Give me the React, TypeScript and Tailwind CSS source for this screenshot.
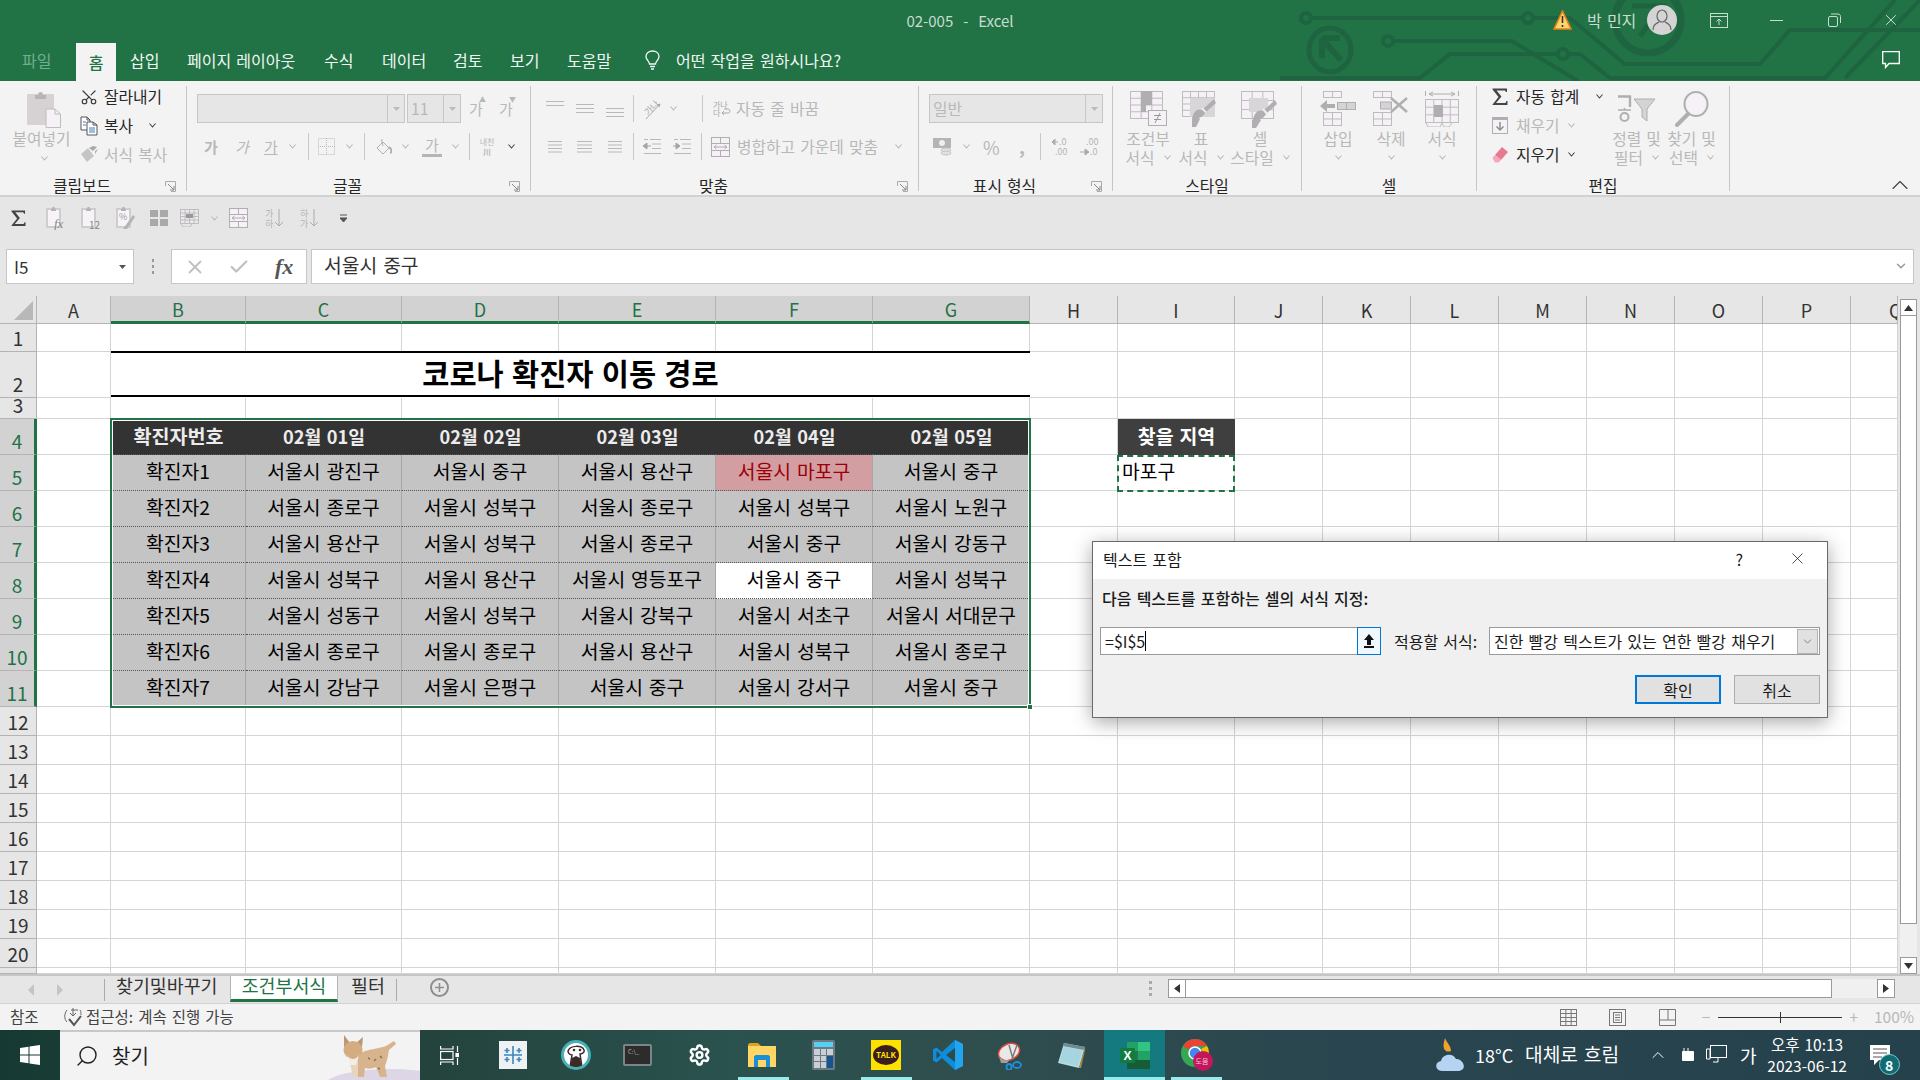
import { ChevronDown, Scissors, Search, Settings, X, Check, ChevronUp } from 'lucide-react';

const GR = '#bebcbe';
const GD = '#b0aeb0';
const PALE = '#f5f1f6';

const Caret = ({ className = '', dark = false }: { className?: string; dark?: boolean }) => (
  <svg width="7" height="5" viewBox="0 0 7 5" className={`shrink-0 ${className}`}>
    <path d="M0.5 0.5 L3.5 4 L6.5 0.5" fill="none" stroke={dark ? '#444' : '#b8b8b8'} strokeWidth="1.1" />
  </svg>
);

const Vsep = ({ className = '' }: { className?: string }) => <div className={`w-px h-[27px] bg-[#c8c8c8] shrink-0 ${className}`} />;

const Launcher = () => (
  <svg width="11" height="11" viewBox="0 0 11 11">
    <path d="M0.5 5 V0.5 H10.5 V10.5 H6" fill="none" stroke="#aaa" />
    <path d="M3 3 L9 9 M5 9 H9 V5" fill="none" stroke="#888" />
  </svg>
);

// Alignment lines. Offsets are the x start and end of each line
const Lines = ({ rows, y = 1, gap = 5, w = 18 }: { rows: [number, number][]; y?: number; gap?: number; w?: number }) => (
  <svg width={w} height="18" viewBox={`0 0 ${w} 18`} className="shrink-0">
    {rows.map(([a, b], i) => (
      <path key={i} d={`M${a} ${y + i * gap + 0.5} H${b}`} stroke="#b9b9b9" />
    ))}
  </svg>
);

const GridIcon = ({ w = 18, h = 18, nx = 3, ny = 3, fill = PALE, stroke = GR }: { w?: number; h?: number; nx?: number; ny?: number; fill?: string; stroke?: string }) => (
  <g>
    <rect x="0.5" y="0.5" width={w - 1} height={h - 1} fill={fill} stroke={stroke} />
    {Array.from({ length: nx - 1 }, (_, i) => (
      <path key={i} d={`M${0.5 + ((i + 1) * (w - 1)) / nx} 0.5 V${h - 0.5}`} stroke={stroke} />
    ))}
    {Array.from({ length: ny - 1 }, (_, i) => (
      <path key={i} d={`M0.5 ${0.5 + ((i + 1) * (h - 1)) / ny} H${w - 0.5}`} stroke={stroke} />
    ))}
  </g>
);

const Brush = ({ x, y }: { x: number; y: number }) => (
  <g transform={`translate(${x} ${y})`}>
    <path d="M0 20 C1 12 6 9 10 11 L13 14 C11 18 6 20 0 20Z" fill={GD} />
    <path d="M11 10 L22 0 L24 4 L14 13Z" fill={GD} />
    <path d="M10 9 L14 13" stroke="#f3f3f3" strokeWidth="1.5" />
  </g>
);

const PasteIcon = () => (
  <svg width="36" height="38" viewBox="0 0 36 38">
    <rect x="1" y="4" width="27" height="31" rx="1" fill="#d6d2d4" />
    <path d="M9 5 H12 C12 1 17 1 17 5 H20 V9 H9Z" fill="#b8b4b6" />
    <path d="M20 19 H29 L34.5 24 V37.5 H20Z" fill={PALE} stroke={GR} />
    <path d="M29 19 V24 H34.5" fill="none" stroke={GR} />
  </svg>
);

const CopyIcon = () => (
  <svg width="18" height="20" viewBox="0 0 18 20">
    <path d="M1 1 H7 L10 4 V14 H1Z M7 1 V4 H10" fill="#fff" stroke="#555" />
    <path d="M7 6 H13 L17 9 V19 H7Z M13 6 V9 H17" fill="#fff" stroke="#555" />
    <path d="M3 6 H6 M3 9 H6 M9 12 H15 M9 14 H15 M9 16 H15" stroke="#3f7cc0" />
  </svg>
);

const PainterIcon = () => (
  <svg width="19" height="17" viewBox="0 0 19 17">
    <path d="M1 8 L8 2 L14 10 L7 16Z" fill="#c6c4c6" />
    <path d="M9 2 L13 0 L17 1 L13 5Z M15 5 L18 3 L15 8Z" fill="#a8a8a8" />
  </svg>
);

const BorderIcon = () => (
  <svg width="17" height="18" viewBox="0 0 17 18">
    <rect x="0.5" y="0.5" width="16" height="16" fill="none" stroke="#bbb" strokeDasharray="1 1" />
    <path d="M8.5 0 V17 M0 8.5 H17" stroke="#bbb" strokeDasharray="1 1" />
  </svg>
);

const FillIcon = () => (
  <svg width="16" height="18" viewBox="0 0 16 18">
    <path d="M7 4 L13 10 L7 16 L1 10Z" fill={PALE} stroke={GD} />
    <path d="M6 1 C5 4 7 6 7 8" fill="none" stroke={GD} />
    <path d="M13 9 C16 11 16 15 14 15" fill="none" stroke={GD} strokeWidth="2" />
  </svg>
);

const OrientIcon = () => (
  <svg width="20" height="24" viewBox="0 0 20 24">
    <text x="1" y="15" fontSize="9" fill="#a8a8a8" transform="rotate(-45 8 12)">가나</text>
    <path d="M3 22 L17 7 M17 7 L14 8 M17 7 L16 10" stroke="#a8a8a8" fill="none" />
  </svg>
);

const WrapIcon = () => (
  <svg width="18" height="17" viewBox="0 0 18 17">
    <text x="0" y="8" fontSize="8" fill="#a8a8a8">가나</text>
    <text x="0" y="16" fontSize="8" fill="#a8a8a8">다</text>
    <path d="M9 13 H15 C17.5 13 17.5 9 15 9 H11 M9 13 L11 11 M9 13 L11 15" stroke="#a8a8a8" fill="none" />
  </svg>
);

const IndentIcon = ({ right = false }: { right?: boolean }) => (
  <svg width="18" height="17" viewBox="0 0 18 17">
    <path d="M7 1.5 H18 M9 6 H18 M9 10.5 H18 M1 15.5 H18 M1 1.5 H5" stroke="#b9b9b9" />
    <path d={right ? 'M0 8 H5 M3 5 L7 8 L3 11Z' : 'M8 8 H3 M4 5 L0 8 L4 11Z'} stroke="#a4a4a4" fill="#a4a4a4" />
  </svg>
);

const MergeIcon = () => (
  <svg width="19" height="20" viewBox="0 0 19 20">
    <rect x="0.5" y="0.5" width="18" height="19" fill={PALE} stroke={GD} />
    <path d="M0.5 6.5 H18.5 M0.5 13.5 H18.5 M9.5 0.5 V6.5 M9.5 13.5 V19.5" stroke={GD} />
    <path d="M3 10 H16 M3 10 L5.5 8 M3 10 L5.5 12 M16 10 L13.5 8 M16 10 L13.5 12" stroke={GD} fill="none" />
  </svg>
);

const CurrencyIcon = () => (
  <svg width="19" height="20" viewBox="0 0 19 20">
    <rect x="0" y="1" width="18" height="10" fill="#b5b3b5" />
    <circle cx="9" cy="6" r="3" fill="#eee" />
    <ellipse cx="13" cy="13" rx="5" ry="2" fill="#e2e0e2" stroke="#c4c4c4" />
    <ellipse cx="13" cy="16" rx="5" ry="2" fill="#e2e0e2" stroke="#c4c4c4" />
  </svg>
);

const DecimalIcon = ({ inc = false }: { inc?: boolean }) => (
  <svg width="19" height="20" viewBox="0 0 19 20" fontSize="9" fill="#b5b5b5">
    {inc ? (
      <>
        <path d="M0 5 H6 M0 5 L3 2 V8Z" stroke="#aaa" />
        <text x="7" y="8">.0</text>
        <text x="3" y="18">.00</text>
      </>
    ) : (
      <>
        <text x="6" y="8">.00</text>
        <path d="M0 15 H6 M9 15 L5 12 V18Z" stroke="#aaa" fill="#aaa" />
        <text x="10" y="18">.0</text>
      </>
    )}
  </svg>
);

const CondIcon = () => (
  <svg width="37" height="36" viewBox="0 0 37 36">
    <GridIcon w={33} h={28} nx={3} ny={4} />
    <path d="M11 0 H22 V7 H11Z M11 7 H22 V14 H11Z M11 14 H16 V21 H11Z" fill={GD} />
    <rect x="18.5" y="19.5" width="18" height="15" fill={PALE} stroke={GD} />
    <path d="M24 24.5 H31 M24 28.5 H31 M30 22 L25 32" stroke="#999" fill="none" />
  </svg>
);

const TableIcon = () => (
  <svg width="38" height="37" viewBox="0 0 38 37">
    <GridIcon w={33} h={26} nx={4} ny={4} />
    <rect x="8" y="7" width="25" height="19" fill="#d9d6d9" />
    <Brush x={10} y={8} />
    <path d="M10 28 C12 26 16 26 18 28 L14 36 H10Z" fill={GD} />
  </svg>
);

const CellStyleIcon = () => (
  <svg width="39" height="38" viewBox="0 0 39 38">
    <GridIcon w={33} h={28} nx={3} ny={3} />
    <rect x="8" y="7" width="19" height="14" fill="#d9d6d9" />
    <Brush x={12} y={9} />
    <path d="M11 29 C13 27 18 27 20 29 L15 37 H11Z" fill={GD} />
  </svg>
);

const InsertIcon = () => (
  <svg width="36" height="35" viewBox="0 0 36 35">
    <rect x="3.5" y="0.5" width="18" height="6" fill={PALE} stroke={GR} />
    <path d="M12.5 0.5 V6.5" stroke={GR} />
    <rect x="17.5" y="11.5" width="18" height="7" fill="#d6d3d6" stroke={GD} />
    <path d="M26.5 11.5 V18.5" stroke={GD} />
    <path d="M0 15 L7 9 V13 H15 V17 H7 V21Z" fill={GD} />
    <g transform="translate(3 21)"><GridIcon w={19} h={14} nx={2} ny={2} /></g>
  </svg>
);

const DeleteIcon = () => (
  <svg width="36" height="35" viewBox="0 0 36 35">
    <rect x="0.5" y="0.5" width="18" height="6" fill={PALE} stroke={GR} />
    <path d="M9.5 0.5 V6.5" stroke={GR} />
    <rect x="7.5" y="11" width="11" height="7" fill="#d6d3d6" stroke={GD} />
    <g transform="translate(0 21)"><GridIcon w={19} h={14} nx={2} ny={2} /></g>
    <path d="M18 7 L34 21 M34 7 L18 21" stroke={GD} strokeWidth="2.5" />
  </svg>
);

const FormatIcon = () => (
  <svg width="35" height="36" viewBox="0 0 35 36">
    <path d="M0.5 0 V5 M33.5 0 V5 M4 3 H30 M4 3 L8 1 M4 3 L8 5 M30 3 L26 1 M30 3 L26 5" stroke={GD} fill="none" />
    <g transform="translate(0 8)"><GridIcon w={34} h={24} nx={4} ny={3} /></g>
    <rect x="9" y="14" width="9" height="12" fill={GD} />
    <path d="M1 32 L3 36 H15 L17 32 M17 32 L19 36 H24 L27 32" fill="none" stroke={GR} />
  </svg>
);

const SigmaIcon = ({ size = 16, color = '#444' }: { size?: number; color?: string }) => (
  <svg width={size} height={size * 1.12} viewBox="0 0 16 18">
    <path d="M0.5 0.5 H15 V4 H14 L13 2.5 H4.5 L9.5 8.5 L4 15 H13.5 L14.5 13 H15.5 V17.5 H0.5 V16.5 L6.5 9 L0.5 1.5Z" fill={color} />
  </svg>
);

const FillDownIcon = () => (
  <svg width="16" height="17" viewBox="0 0 16 17">
    <rect x="0.5" y="0.5" width="15" height="16" fill={PALE} stroke={GD} />
    <path d="M0.5 0.5 H15.5 V3 H0.5Z" fill={GD} />
    <path d="M8 5 V13 M4.5 9.5 L8 13 L11.5 9.5" stroke="#8f8f8f" strokeWidth="1.5" fill="none" />
  </svg>
);

const EraserIcon = () => (
  <svg width="17" height="17" viewBox="0 0 17 17">
    <path d="M10 1 L16 6 L9 14 L3 9Z" fill="#e87a90" />
    <path d="M3 9 L9 14 L6.5 16.5 H3 L0.5 12Z" fill="#f2a8b6" />
  </svg>
);

const SortFilterIcon = () => (
  <svg width="38" height="28" viewBox="0 0 38 28">
    <path d="M0 1.5 H12 V12" fill="none" stroke={GD} strokeWidth="2.4" />
    <path d="M0 15 H13 M6.5 13 V15" stroke={GD} strokeWidth="1.6" />
    <circle cx="6.5" cy="22" r="4" fill="none" stroke={GD} strokeWidth="2" />
    <path d="M16 4 H37 L29 14 V26 L24 22 V14Z" fill="#d6d3d6" stroke={GD} />
  </svg>
);

const FindIcon = () => (
  <svg width="36" height="36" viewBox="0 0 36 36">
    <ellipse cx="22" cy="13" rx="11.5" ry="12" fill={PALE} stroke={GD} strokeWidth="2" />
    <path d="M14 23 L3 34" stroke={GD} strokeWidth="4" strokeLinecap="round" />
  </svg>
);

const BigButton = ({ w, icon, line1, line2 }: { w: string; icon: React.ReactNode; line1: string; line2?: string }) => (
  <div className={`flex flex-col items-center pt-[5px] text-[#b8b8b8] shrink-0 ${w}`}>
    <div className="h-[37px] flex items-start justify-center">{icon}</div>
    <div className="h-[19px] mt-[1px] flex items-center whitespace-nowrap">{line1}</div>
    <div className="h-[19px] flex items-center gap-[9px] whitespace-nowrap">
      {line2}
      <Caret />
    </div>
  </div>
);

const Group = ({ w, label, launcher, children }: { w: string; label: string; launcher?: boolean; children: React.ReactNode }) => (
  <div className={`h-[105px] mt-[5px] border-r border-[#c6c6c6] flex flex-col shrink-0 ${w}`}>
    <div className="h-[90px] shrink-0 flex flex-col">{children}</div>
    <div className="h-[20px] shrink-0 flex items-center">
      <div className="flex-1 text-center text-[#262626] whitespace-nowrap">{label}</div>
      {launcher && (
        <div className="w-[22px] flex justify-start pl-[1px]">
          <Launcher />
        </div>
      )}
    </div>
  </div>
);

const SmallRow = ({ icon, children, className = '' }: { icon: React.ReactNode; children: React.ReactNode; className?: string }) => (
  <div className={`h-[29px] flex items-center whitespace-nowrap ${className}`}>
    <div className="w-[24px] flex items-center shrink-0">{icon}</div>
    {children}
  </div>
);

const Ribbon = () => (
  <div className="h-[116px] bg-[#f3f3f3] border-b-2 border-[#d2d2d2] flex text-[15.8px] leading-none">
    <Group w="w-[187px]" label="클립보드" launcher>
      <div className="flex">
        <div className="w-[80px] flex flex-col items-center pt-[4px] text-[#b8b8b8] pl-[8px] shrink-0">
          <PasteIcon />
          <div className="mt-[1px] h-[19px] flex items-center -ml-[5px] whitespace-nowrap">붙여넣기</div>
          <Caret className="mt-[8px]" />
        </div>
        <div className="-mt-[4px] text-[#262626]">
          <SmallRow icon={<Scissors size={18} strokeWidth={1.6} color="#3d3d3d" className="-rotate-90" />}>잘라내기</SmallRow>
          <SmallRow icon={<CopyIcon />}>
            복사
            <Caret dark className="ml-[16px]" />
          </SmallRow>
          <SmallRow icon={<PainterIcon />} className="text-[#b8b8b8]">서식 복사</SmallRow>
        </div>
      </div>
    </Group>

    <Group w="w-[344px]" label="글꼴" launcher>
      <div className="mt-[8px] h-[29px] flex items-center">
        <div className="ml-[10px] w-[208px] h-[29px] bg-[#e6e6e6] border border-[#c6c6c6] flex justify-end">
          <div className="w-[17px] border-l border-[#c6c6c6] flex items-center justify-center">
            <svg width="7" height="4" viewBox="0 0 7 4"><path d="M0 0 H7 L3.5 4Z" fill="#bbb" /></svg>
          </div>
        </div>
        <div className="ml-[2px] w-[54px] h-[29px] bg-[#e6e6e6] border border-[#c6c6c6] flex">
          <div className="flex-1 pl-[3px] flex items-center text-[#b8b8b8]">11</div>
          <div className="w-[17px] border-l border-[#c6c6c6] flex items-center justify-center">
            <svg width="7" height="4" viewBox="0 0 7 4"><path d="M0 0 H7 L3.5 4Z" fill="#bbb" /></svg>
          </div>
        </div>
        <div className="ml-[8px] w-[16px] text-[#b8b8b8] text-[15px] relative">가<span className="absolute -top-[5px] left-[10px] text-[7px]">▲</span></div>
        <div className="ml-[14px] w-[16px] text-[#b8b8b8] text-[15px] relative">가<span className="absolute -top-[5px] left-[10px] text-[7px]">▼</span></div>
      </div>
      <div className="mt-[9px] h-[29px] flex items-center text-[#b8b8b8] text-[15px]">
        <span className="ml-[17px] w-[13px] font-bold">가</span>
        <span className="ml-[18px] w-[13px] italic">가</span>
        <span className="ml-[16px] w-[14px] underline">가</span>
        <Caret className="ml-[11px]" />
        <Vsep className="ml-[12px]" />
        <div className="ml-[9px]"><BorderIcon /></div>
        <Caret className="ml-[11px]" />
        <Vsep className="ml-[11px]" />
        <div className="ml-[11px]"><FillIcon /></div>
        <Caret className="ml-[10px]" />
        <div className="ml-[13px] w-[20px] flex flex-col items-center">
          가<div className="w-[20px] h-[3px] bg-[#b5b5b5] mt-[2px]" />
        </div>
        <Caret className="ml-[10px]" />
        <Vsep className="ml-[10px]" />
        <div className="ml-[9px] w-[16px] flex flex-col items-center text-[8px] leading-[10px] whitespace-nowrap">
          <span>내천</span>
          <span className="font-bold">川</span>
        </div>
        <Caret dark className="ml-[13px]" />
      </div>
    </Group>

    <Group w="w-[388px]" label="맞춤" launcher>
      <div className="mt-[8px] h-[29px] flex items-center">
        <div className="ml-[15px]"><Lines rows={[[0, 18], [0, 18]]} y={1} gap={4} /></div>
        <div className="ml-[12px]"><Lines rows={[[0, 18], [0, 18], [0, 18]]} y={4} gap={4} /></div>
        <div className="ml-[12px]"><Lines rows={[[0, 18], [0, 18], [0, 18]]} y={8} gap={4} /></div>
        <Vsep className="ml-[9px]" />
        <div className="ml-[9px]"><OrientIcon /></div>
        <Caret className="ml-[7px]" />
        <Vsep className="ml-[25px]" />
        <div className="ml-[10px]"><WrapIcon /></div>
        <span className="ml-[5px] text-[#b8b8b8] whitespace-nowrap">자동 줄 바꿈</span>
      </div>
      <div className="mt-[9px] h-[29px] flex items-center">
        <div className="ml-[17px]"><Lines w={14} rows={[[0, 14], [0, 14], [0, 14], [0, 14]]} y={3} gap={3.5} /></div>
        <div className="ml-[15px]"><Lines w={15} rows={[[0, 15], [0, 15], [0, 15], [0, 15]]} y={3} gap={3.5} /></div>
        <div className="ml-[16px]"><Lines w={14} rows={[[0, 14], [0, 14], [0, 14], [0, 14]]} y={3} gap={3.5} /></div>
        <Vsep className="ml-[11px]" />
        <div className="ml-[9px]"><IndentIcon /></div>
        <div className="ml-[12px]"><IndentIcon right /></div>
        <Vsep className="ml-[10px]" />
        <div className="ml-[9px]"><MergeIcon /></div>
        <span className="ml-[7px] w-[143px] text-[#b8b8b8] whitespace-nowrap">병합하고 가운데 맞춤</span>
        <Caret className="ml-[15px]" />
      </div>
    </Group>

    <Group w="w-[194px]" label="표시 형식" launcher>
      <div className="mt-[8px] h-[29px] flex items-center">
        <div className="ml-[10px] w-[174px] h-[29px] bg-[#e6e6e6] border border-[#c6c6c6] flex">
          <div className="flex-1 pl-[3px] flex items-center text-[#b8b8b8]">일반</div>
          <div className="w-[17px] border-l border-[#c6c6c6] flex items-center justify-center">
            <svg width="7" height="4" viewBox="0 0 7 4"><path d="M0 0 H7 L3.5 4Z" fill="#bbb" /></svg>
          </div>
        </div>
      </div>
      <div className="mt-[9px] h-[29px] flex items-center text-[#b8b8b8]">
        <div className="ml-[14px]"><CurrencyIcon /></div>
        <Caret className="ml-[11px]" />
        <span className="ml-[13px] w-[16px] text-[18px]">%</span>
        <span className="ml-[20px] w-[6px] text-[18px] font-bold -mt-[2px]">,</span>
        <Vsep className="ml-[15px]" />
        <div className="ml-[11px]"><DecimalIcon inc /></div>
        <div className="ml-[9px]"><DecimalIcon /></div>
      </div>
    </Group>

    <Group w="w-[189px]" label="스타일">
      <div className="flex pl-[10px]">
        <BigButton w="w-[50px]" icon={<CondIcon />} line1="조건부" line2="서식" />
        <BigButton w="w-[56px]" icon={<TableIcon />} line1="표" line2="서식" />
        <BigButton w="w-[62px]" icon={<CellStyleIcon />} line1="셀" line2="스타일" />
      </div>
    </Group>

    <Group w="w-[175px]" label="셀">
      <div className="flex pl-[10px]">
        <BigButton w="w-[52px]" icon={<InsertIcon />} line1="삽입" />
        <BigButton w="w-[54px]" icon={<DeleteIcon />} line1="삭제" />
        <BigButton w="w-[48px]" icon={<FormatIcon />} line1="서식" />
      </div>
    </Group>

    <Group w="w-[253px]" label="편집">
      <div className="flex">
        <div className="w-[132px] -mt-[4px] pl-[15px] text-[#262626] shrink-0">
          <SmallRow icon={<SigmaIcon />}>
            <span className="w-[63px]">자동 합계</span>
            <Caret dark className="ml-[17px]" />
          </SmallRow>
          <SmallRow icon={<FillDownIcon />} className="text-[#b8b8b8]">
            채우기
            <Caret className="ml-[8px]" />
          </SmallRow>
          <SmallRow icon={<EraserIcon />}>
            지우기
            <Caret dark className="ml-[8px]" />
          </SmallRow>
        </div>
        <div className="flex w-[55px] shrink-0"><BigButton w="w-[55px]" icon={<div className="mt-[4px]"><SortFilterIcon /></div>} line1="정렬 및" line2="필터" /></div>
        <div className="flex w-[55px] shrink-0"><BigButton w="w-[55px]" icon={<FindIcon />} line1="찾기 및" line2="선택" /></div>
      </div>
    </Group>

    <div className="flex-1 flex justify-end items-end -mb-[4px] pr-[6px]">
      <ChevronUp size={28} strokeWidth={1} color="#444" />
    </div>
  </div>
);

const QatClip = ({ tag }: { tag: React.ReactNode }) => (
  <svg width="20" height="24" viewBox="0 0 20 24" className="shrink-0">
    <rect x="1" y="3" width="13" height="18" fill="#f7f4f7" stroke="#d0cdd0" strokeWidth="2" />
    <path d="M5 3 H6 C6 0 9 0 9 3 H10 V5 H5Z" fill="#b5b3b5" />
    {tag}
  </svg>
);

const Qat = () => (
  <div className="h-[52px] flex items-center pb-[10px]">
    <div className="ml-[11px]"><SigmaIcon size={15} /></div>
    <div className="ml-[20px]"><QatClip tag={<text x="8" y="22" fontSize="13" fontStyle="italic" fontFamily="Liberation Serif" fill="#888">fx</text>} /></div>
    <div className="ml-[15px]"><QatClip tag={<text x="8" y="23" fontSize="10" fill="#888">12</text>} /></div>
    <div className="ml-[15px]">
      <QatClip tag={<><text x="3" y="14" fontSize="9" fill="#999">%</text><path d="M7 23 L17 9 L19 11 L11 23Z" fill="#b5b3b5" /></>} />
    </div>
    <svg width="18" height="16" viewBox="0 0 18 16" className="ml-[14px] shrink-0"><path d="M0 0 H8 V7 H0Z M10 0 H18 V7 H10Z M0 9 H8 V16 H0Z M10 9 H18 V16 H10Z" fill="#a9a9a9" /></svg>
    <svg width="19" height="18" viewBox="0 0 19 18" className="ml-[12px] shrink-0">
      <GridIcon w={19} h={15} nx={4} ny={4} fill="#ece9ec" />
      <rect x="6" y="5" width="7" height="4" fill="#999" />
      <path d="M1 15 L3 18 H10 L12 15" fill="none" stroke={GR} />
    </svg>
    <Caret className="ml-[12px]" />
    <div className="ml-[11px]"><MergeIcon /></div>
    <svg width="19" height="20" viewBox="0 0 19 20" className="ml-[17px] shrink-0">
      <text x="0" y="9" fontSize="9" fill="#b5b5b5">가</text>
      <text x="0" y="19" fontSize="9" fill="#b5b5b5">하</text>
      <path d="M14 1 V18 M10 14 L14 18 L18 14" stroke="#aaa" fill="none" />
    </svg>
    <svg width="19" height="20" viewBox="0 0 19 20" className="ml-[16px] shrink-0">
      <text x="0" y="9" fontSize="9" fill="#b5b5b5">하</text>
      <text x="0" y="19" fontSize="9" fill="#b5b5b5">가</text>
      <path d="M14 1 V18 M10 14 L14 18 L18 14" stroke="#aaa" fill="none" />
    </svg>
    <svg width="7" height="8" viewBox="0 0 7 8" className="ml-[21px] shrink-0"><path d="M0 1 H7 M0 4 H7 L3.5 8Z" stroke="#555" fill="#555" /></svg>
  </div>
);

const FormulaBar = () => (
  <div className="h-[35px] flex text-[#333] leading-none">
    <div className="ml-[6px] w-[128px] bg-white border border-[#c6c6c6] flex items-center justify-between pl-[7px] pr-[7px] text-[17px]">
      I5
      <svg width="7" height="4" viewBox="0 0 7 4"><path d="M0 0 H7 L3.5 4Z" fill="#555" /></svg>
    </div>
    <div className="w-[37px] flex flex-col items-center justify-center gap-[3px]">
      <i className="w-[2px] h-[3px] bg-[#999]" />
      <i className="w-[2px] h-[3px] bg-[#999]" />
      <i className="w-[2px] h-[3px] bg-[#999]" />
    </div>
    <div className="w-[136px] bg-white border border-[#c6c6c6] flex items-center pl-[12px]">
      <X size={22} strokeWidth={2} color="#c0c0c0" />
      <Check size={22} strokeWidth={2.4} color="#c0c0c0" className="ml-[22px]" />
      <span className="ml-[25px] text-[22px] italic font-bold font-['Liberation_Serif',serif] text-[#555]">fx</span>
    </div>
    <div className="ml-[4px] w-[1603px] bg-white border border-[#c6c6c6] flex items-center justify-between pl-[12px] pr-[5px] pb-[2px] text-[19.3px]">
      서울시 중구
      <ChevronDown size={14} color="#999" strokeWidth={2.5} />
    </div>
  </div>
);

const COLS = ['A', 'B', 'C', 'D', 'E', 'F', 'G', 'H', 'I', 'J', 'K', 'L', 'M', 'N', 'O', 'P', 'Q'];

const DATA = [
  ['확진자1', '서울시 광진구', '서울시 중구', '서울시 용산구', '서울시 마포구', '서울시 중구'],
  ['확진자2', '서울시 종로구', '서울시 성북구', '서울시 종로구', '서울시 성북구', '서울시 노원구'],
  ['확진자3', '서울시 용산구', '서울시 성북구', '서울시 종로구', '서울시 중구', '서울시 강동구'],
  ['확진자4', '서울시 성북구', '서울시 용산구', '서울시 영등포구', '서울시 중구', '서울시 성북구'],
  ['확진자5', '서울시 성동구', '서울시 성북구', '서울시 강북구', '서울시 서초구', '서울시 서대문구'],
  ['확진자6', '서울시 종로구', '서울시 종로구', '서울시 용산구', '서울시 성북구', '서울시 종로구'],
  ['확진자7', '서울시 강남구', '서울시 은평구', '서울시 중구', '서울시 강서구', '서울시 중구'],
];
const HEAD = ['확진자번호', '02월 01일', '02월 02일', '02월 03일', '02월 04일', '02월 05일'];

const Blank = () => <div className="border-r border-b border-[#d4d4d4]" />;

const RowHead = ({ n }: { n: number }) => {
  const sel = n >= 4 && n <= 11;
  return (
    <div
      className={`flex items-end justify-center text-[19px] leading-[27px] overflow-hidden ${
        sel ? 'bg-[#d2d2d2] text-[#217346] border-r-[3px] border-[#217346] border-b border-b-[#b4b4b4]' : 'bg-[#e6e6e6] text-[#333] border-r border-b border-[#b4b4b4]'
      }`}
    >
      {n}
    </div>
  );
};

const SheetRow = ({ n }: { n: number }) => {
  const rest = (from: number) => COLS.slice(from).map((c) => <Blank key={c} />);
  if (n === 2) {
    return (
      <>
        <RowHead n={n} />
        <Blank />
        <div className="col-span-6 -translate-y-px pb-[2px] border-y-2 border-black flex items-center justify-center font-bold text-[29.5px] text-black bg-white">
          코로나 확진자 이동 경로
        </div>
        {rest(7)}
      </>
    );
  }
  if (n >= 4 && n <= 11) {
    const isHead = n === 4;
    const row = isHead ? HEAD : DATA[n - 5];
    return (
      <>
        <RowHead n={n} />
        <Blank />
        {row.map((text, i) => {
          const pink = n === 5 && i === 4;
          const white = n === 8 && i === 4;
          return (
            <div
              key={i}
              className={`flex items-center justify-center pb-[1px] whitespace-nowrap border-b [border-bottom-style:dotted] border-b-[#555] ${
                isHead
                  ? `bg-[#333333] text-[#ececec] font-bold ${i === 0 ? 'text-[19.6px]' : 'text-[18.2px]'}`
                  : `border-r border-r-[#a6a6a6] text-[19.3px] ${pink ? 'bg-[#d39ea1] text-[#9c0006]' : white ? 'bg-white text-black' : 'bg-[#c4c4c4] text-black'}`
              }`}
            >
              {text}
            </div>
          );
        })}
        <Blank />
        {n === 4 && <div className="bg-[#3f3f3f] text-white font-bold text-[19.4px] pb-[2px] flex items-center justify-center">찾을 지역</div>}
        {n === 5 && <div className="flex items-center pl-[4px] pb-[1px] text-[19.3px] text-black border-r border-b border-[#d4d4d4]">마포구</div>}
        {n > 5 && <Blank />}
        {rest(9)}
      </>
    );
  }
  return (
    <>
      <RowHead n={n} />
      {rest(0)}
    </>
  );
};

const Sheet = () => (
  <div className="flex">
    <div className="relative w-[1898px] h-[678px] bg-white grid grid-cols-[37px_74px_135px_156px_157px_157px_157px_157px_88px_117px_88px_88px_88px_88px_88px_88px_88px_47px] grid-rows-[28px_28px_46px_21px_36px_36px_36px_36px_36px_36px_36px_36px_29px_29px_29px_29px_29px_29px_29px_29px_29px_6px] leading-none overflow-hidden">
      <div className="bg-[#e6e6e6] border-r border-b border-[#b4b4b4] flex items-end justify-end p-[3px]">
        <svg width="19" height="19" viewBox="0 0 19 19"><path d="M19 0 V19 H0Z" fill="#b8b8b8" /></svg>
      </div>
      {COLS.map((c, i) => {
        const sel = i >= 1 && i <= 6;
        return (
          <div
            key={c}
            className={`flex items-center text-[18px] overflow-hidden ${i === 16 ? 'justify-start pl-[38px]' : 'justify-center'} ${
              sel ? 'bg-[#d2d2d2] text-[#217346] border-r border-r-[#b4b4b4] border-b-[3px] border-b-[#217346]' : 'bg-[#e6e6e6] text-[#333] border-r border-b border-[#b4b4b4]'
            }`}
          >
            {c}
          </div>
        );
      })}
      {Array.from({ length: 21 }, (_, i) => (
        <SheetRow key={i} n={i + 1} />
      ))}
      <div className="absolute left-[110px] top-[122px] w-[921px] h-[290px] border-[2.5px] border-[#217346] shadow-[inset_0_0_0_1px_#fff] pointer-events-none" />
      <div className="absolute left-[1027px] top-[408px] w-[6px] h-[6px] bg-[#217346] border border-white" />
      <div className="absolute left-[1117px] top-[159px] w-[118px] h-[37px] border-2 border-dashed border-[#217346]" />
    </div>
    <div className="flex-1 bg-[#e6e6e6] pt-[3px] pl-[2px] flex flex-col">
      <div className="w-[17px] h-[17px] bg-white border border-[#9a9a9a] flex items-center justify-center">
        <svg width="9" height="6" viewBox="0 0 9 6"><path d="M0 6 L4.5 0 L9 6Z" fill="#333" /></svg>
      </div>
      <div className="w-[17px] h-[608px] bg-white border-x border-b border-[#9a9a9a]" />
      <div className="w-[17px] h-[33px] bg-[#f0f0f0]" />
      <div className="w-[17px] h-[17px] bg-white border border-[#9a9a9a] flex items-center justify-center">
        <svg width="9" height="6" viewBox="0 0 9 6"><path d="M0 0 L4.5 6 L9 0Z" fill="#333" /></svg>
      </div>
    </div>
  </div>
);

const SheetTabs = () => (
  <div className="h-[29px] bg-[#e6e6e6] border-t-2 border-[#c6c6c6] flex items-center text-[18.4px] leading-none text-[#333]">
    <svg width="6" height="12" viewBox="0 0 6 12" className="ml-[28px]"><path d="M6 0 L0 6 L6 12Z" fill="#c4c4c4" /></svg>
    <svg width="6" height="12" viewBox="0 0 6 12" className="ml-[23px]"><path d="M0 0 L6 6 L0 12Z" fill="#c4c4c4" /></svg>
    <div className="ml-[41px] w-px h-[22px] bg-[#aaa]" />
    <div className="ml-[11px] w-[100px] pb-[8px] whitespace-nowrap">찾기및바꾸기</div>
    <div className="ml-[14px] w-[108px] h-[26px] pb-[4px] self-start bg-white border-b-[3px] border-[#217346] border-x border-x-[#b4b4b4] text-[#217346] flex items-center justify-center whitespace-nowrap">조건부서식</div>
    <div className="ml-[13px] w-[32px] pb-[8px] whitespace-nowrap">필터</div>
    <div className="ml-[13px] w-px h-[22px] bg-[#aaa]" />
    <div className="ml-[33px] mb-[4px] w-[19px] h-[19px] rounded-full border-2 border-[#8e8e8e] flex items-center justify-center">
      <svg width="9" height="9" viewBox="0 0 9 9"><path d="M4.5 0 V9 M0 4.5 H9" stroke="#8e8e8e" strokeWidth="1.5" /></svg>
    </div>
    <div className="ml-[700px] mb-[3px] flex flex-col gap-[3px]">
      <i className="w-[3px] h-[3px] bg-[#aaa]" />
      <i className="w-[3px] h-[3px] bg-[#aaa]" />
      <i className="w-[3px] h-[3px] bg-[#aaa]" />
    </div>
    <div className="ml-[16px] mb-[3px] h-[19px] w-[727px] flex bg-[#f0f0f0]">
      <div className="w-[18px] bg-white border border-[#9a9a9a] flex items-center justify-center">
        <svg width="6" height="9" viewBox="0 0 6 9"><path d="M6 0 L0 4.5 L6 9Z" fill="#333" /></svg>
      </div>
      <div className="w-[646px] bg-white border-y border-r border-[#9a9a9a]" />
      <div className="flex-1" />
      <div className="w-[18px] bg-white border border-[#9a9a9a] flex items-center justify-center">
        <svg width="6" height="9" viewBox="0 0 6 9"><path d="M0 0 L6 4.5 L0 9Z" fill="#333" /></svg>
      </div>
    </div>
  </div>
);

const StatusBar = () => (
  <div className="h-[27px] bg-[#f3f3f3] border-t border-[#d2d2d2] flex items-center text-[15.5px] text-[#444] leading-none whitespace-nowrap">
    <span className="ml-[10px] w-[30px]">참조</span>
    <svg width="19" height="20" viewBox="0 0 19 20" className="ml-[24px]">
      <path d="M3 3 C0 7 0 12 3 15 M16 3 C17 5 17 6 17 8" fill="none" stroke="#666" />
      <path d="M9 1 V9 M6 6 L9 9 L12 6 M14 3 H7" fill="none" stroke="#666" />
      <path d="M5 12 L10 18 L17 9" fill="none" stroke="#555" strokeWidth="2" />
    </svg>
    <span className="ml-[3px]">접근성: 계속 진행 가능</span>
    <div className="ml-auto flex items-center">
      <svg width="17" height="17" viewBox="0 0 17 17"><GridIcon w={17} h={17} nx={3} ny={4} fill="none" stroke="#777" /></svg>
      <svg width="17" height="17" viewBox="0 0 17 17" className="ml-[32px]">
        <rect x="0.5" y="0.5" width="16" height="16" fill="none" stroke="#777" />
        <rect x="4.5" y="3.5" width="8" height="10" fill="none" stroke="#777" />
        <path d="M6 6 H11 M6 8.5 H11 M6 11 H11" stroke="#777" />
      </svg>
      <svg width="17" height="17" viewBox="0 0 17 17" className="ml-[33px]">
        <path d="M0.5 0.5 V16.5 H16.5 V0.5 M9 0.5 V11 H0.5 M9 11 H16.5 M0.5 0.5 H16.5" fill="none" stroke="#777" />
      </svg>
      <span className="ml-[26px] text-[#b8b8b8]">−</span>
      <div className="ml-[8px] w-[124px] h-[1px] bg-[#333] flex justify-center items-center">
        <i className="w-px h-[11px] bg-[#333]" />
      </div>
      <span className="ml-[7px] text-[#b8b8b8]">+</span>
      <span className="ml-[16px] mr-[10px] w-[36px] text-[#b8b8b8] text-right">100%</span>
    </div>
  </div>
);

const Circuit = () => (
  <svg width="640" height="81" viewBox="1280 0 640 81" className="absolute right-0 top-0" fill="none" stroke="#1e6440" strokeWidth="4">
    <circle cx="1306" cy="18" r="5" />
    <path d="M1311 18 H1523" />
    <circle cx="1528" cy="18" r="5" />
    <path d="M1533 18 H1570 L1625 64 H1760 L1790 30 H1920" />
    <ellipse cx="1330" cy="50" rx="21" ry="22" strokeWidth="5" />
    <path d="M1322 38 H1340 M1322 38 V58 M1323 40 L1341 60" strokeWidth="6" />
    <circle cx="1388" cy="41" r="5" />
    <path d="M1393 41 H1512 L1550 64 L1578 81" />
    <path d="M1280 78 H1420 L1450 54 H1558" />
    <circle cx="1563" cy="54" r="5" />
    <path d="M1568 54 H1580 L1610 78 H1825 L1895 0" />
    <path d="M1845 78 L1920 0" />
    <circle cx="1648" cy="20" r="33" strokeWidth="7" />
    <path d="M1632 6 H1662 L1640 36" strokeWidth="5" />
  </svg>
);

const TitleBar = () => (
  <div className="relative h-[81px] bg-[#217346] text-[16px] leading-none whitespace-nowrap overflow-hidden">
    <Circuit />
    <div className="relative h-[40px] flex items-center">
      <div className="absolute left-0 right-0 top-[13px] flex justify-center text-[15px] text-[#c9dcd0]">
        02-005&nbsp;&nbsp;-&nbsp;&nbsp;Excel
      </div>
      <svg width="19" height="20" viewBox="0 0 19 20" className="ml-[1553px]">
        <path d="M9.5 1 L18 19 H1Z" fill="#ffd46a" stroke="#e8801a" strokeWidth="1.6" />
        <path d="M9.5 6 V13 M9.5 15 V17" stroke="#333" strokeWidth="1.6" />
      </svg>
      <span className="ml-[15px] text-[#c9dcd0] w-[48px]">박 민지</span>
      <div className="ml-[12px] w-[30px] h-[30px] rounded-full bg-[#d4d4d4] flex items-center justify-center">
        <svg width="20" height="22" viewBox="0 0 20 22" fill="none" stroke="#666" strokeWidth="1.2">
          <ellipse cx="10" cy="7" rx="5" ry="6" />
          <path d="M1 21 C1 15 5 14 7 13 M19 21 C19 15 15 14 13 13" />
        </svg>
      </div>
      <svg width="18" height="15" viewBox="0 0 18 15" className="ml-[33px]" fill="none" stroke="#c9dcd0">
        <rect x="0.5" y="0.5" width="17" height="14" />
        <path d="M0.5 3.5 H17.5 M9 12 V6 M6.5 8.5 L9 6 L11.5 8.5" />
      </svg>
      <div className="ml-[42px] w-[13px] h-px bg-[#c9dcd0]" />
      <svg width="13" height="14" viewBox="0 0 13 14" className="ml-[45px]" fill="none" stroke="#c9dcd0">
        <rect x="0.5" y="3.5" width="9" height="10" rx="1.5" />
        <path d="M3 1 H10 C11.5 1 12.5 2 12.5 3.5 V10" />
      </svg>
      <X size={18} strokeWidth={1.2} color="#dbe8e0" className="ml-[41px]" />
    </div>
    <div className="relative h-[41px] flex items-center pb-[2px] text-[#f2f7f4]">
      <span className="ml-[22px] w-[30px] text-[#76ad8e]">파일</span>
      <div className="ml-[24px] w-[40px] h-[38px] self-end -mb-[2px] pb-[1px] bg-[#f3f3f3] text-[#217346] flex items-center justify-center font-medium">홈</div>
      <span className="ml-[14px] w-[30px]">삽입</span>
      <span className="ml-[27px] w-[109px]">페이지 레이아웃</span>
      <span className="ml-[28px] w-[30px]">수식</span>
      <span className="ml-[28px] w-[44px]">데이터</span>
      <span className="ml-[27px] w-[30px]">검토</span>
      <span className="ml-[27px] w-[30px]">보기</span>
      <span className="ml-[27px] w-[45px]">도움말</span>
      <svg width="15" height="20" viewBox="0 0 15 20" className="ml-[33px]" fill="none" stroke="#f2f7f4" strokeWidth="1.3">
        <path d="M4.5 14 C4.5 11 1 10 1 6.5 C1 3 4 1 7.5 1 C11 1 14 3 14 6.5 C14 10 10.5 11 10.5 14Z" />
        <path d="M5 16.5 H10 M6 19 H9" />
      </svg>
      <span className="ml-[16px] w-[167px]">어떤 작업을 원하시나요?</span>
      <svg width="18" height="18" viewBox="0 0 18 18" className="ml-[1039px]" fill="none" stroke="#fff" strokeWidth="1.3">
        <path d="M0.7 0.7 H17.3 V12.5 H7 L3.5 16.5 V12.5 H0.7Z" />
      </svg>
    </div>
  </div>
);

const Dialog = () => (
  <div className="absolute left-[1092px] top-[541px] w-[736px] h-[177px] bg-[#f0f0f0] border border-[#6a6a6a] shadow-[0_4px_18px_rgba(0,0,0,0.35)] text-[#1a1a1a] text-[16px] leading-none whitespace-nowrap flex flex-col">
    <div className="h-[37px] bg-white flex items-center pl-[10px] pb-[4px]">
      텍스트 포함
      <span className="ml-auto mr-[-3px]">?</span>
      <X size={19} strokeWidth={1} color="#222" className="ml-[48px] mr-[20px]" />
    </div>
    <div className="mt-[11px] ml-[9px] font-medium">다음 텍스트를 포함하는 셀의 서식 지정:</div>
    <div className="mt-[21px] flex items-center">
      <div className="ml-[7px] w-[281px] h-[28px] bg-white border border-[#9a9a9a] flex">
        <div className="flex-1 pl-[4px] flex items-center">
          =$I$5<i className="w-px h-[20px] bg-black" />
        </div>
        <div className="w-[24px] bg-[#f0f8ff] border border-[#0078d7] -m-px flex items-center justify-center">
          <svg width="10" height="14" viewBox="0 0 10 14"><path d="M5 0 L10 6 H7 V11 H3 V6 H0Z M0 12 H10 V14 H0Z" fill="#111" /></svg>
        </div>
      </div>
      <span className="ml-[13px] w-[84px]">적용할 서식:</span>
      <div className="ml-[11px] w-[331px] h-[28px] bg-white border border-[#9a9a9a] flex items-center pl-[4px]">
        진한 빨강 텍스트가 있는 연한 빨강 채우기
        <div className="ml-auto w-[21px] h-[25px] mr-px bg-[#e1e1e1] border border-[#b4b4b4] flex items-center justify-center">
          <ChevronDown size={13} strokeWidth={1.2} color="#555" />
        </div>
      </div>
    </div>
    <div className="mt-[20px] flex justify-end pr-[7px] gap-[13px]">
      <div className="w-[86px] h-[29px] bg-[#e1e1e1] border-2 border-[#0078d7] flex items-center justify-center">확인</div>
      <div className="w-[86px] h-[29px] bg-[#e1e1e1] border border-[#adadad] flex items-center justify-center">취소</div>
    </div>
  </div>
);

const TaskSlot = ({ ml, w, line, children }: { ml: string; w: string; line?: boolean; children: React.ReactNode }) => (
  <div className={`relative h-[50px] flex items-center justify-center shrink-0 ${ml} ${w}`}>
    {children}
    {line && <div className="absolute bottom-0 -left-[10px] w-[51px] h-[3px] bg-[#99ebeb]" />}
  </div>
);

const Lynx = () => (
  <svg width="100" height="48" viewBox="0 0 100 48" className="shrink-0">
    <ellipse cx="70" cy="52" rx="64" ry="15" fill="#ddd6e6" />
    <path d="M40 21 C48 17 58 17 66 14 L74 9 L76 12 L69 18 C68 24 67 29 65 34 L67 45 L60 45 L56 35 C52 37 48 37 45 36 L44 45 L37 45 L36 32Z" fill="#d8b48e" />
    <path d="M29 26 L33 45 L38 45 L38 28Z" fill="#e6d4bd" />
    <path d="M24 3 L30 11 L24 15Z M43 5 L42 15 L36 11Z" fill="#bf9670" />
    <ellipse cx="33" cy="18" rx="9.5" ry="9" fill="#d4ac82" />
    <path d="M27 22 C29 29 37 29 39 22 L36 33 H30Z" fill="#f4ede3" />
    <path d="M48 26 L50 27 M54 29 L56 27 M60 24 L62 26 M58 36 L60 37" stroke="#94714f" strokeWidth="1.5" />
  </svg>
);

const Taskbar = () => (
  <div className="h-[50px] flex items-center bg-[linear-gradient(90deg,#163a33_0%,#23413a_20%,#2a524e_38%,#2f4e4d_50%,#294550_72%,#25414c_100%)] text-white leading-none whitespace-nowrap">
    <div className="w-[60px] h-[50px] flex items-center justify-center">
      <svg width="20" height="20" viewBox="0 0 20 20" fill="#fff">
        <path d="M0 3 L8.5 1.8 V9.5 H0Z M9.5 1.6 L20 0 V9.5 H9.5Z M0 10.5 H8.5 V18.2 L0 17Z M9.5 10.5 H20 V20 L9.5 18.4Z" />
      </svg>
    </div>
    <div className="w-[360px] h-[50px] bg-[#f3f3f3] border-t-2 border-[#c8c8c8] flex items-center text-[#222] text-[20px] overflow-hidden">
      <Search size={24} strokeWidth={1.4} color="#222" className="ml-[15px] -scale-x-100 shrink-0" />
      <span className="ml-[13px]">찾기</span>
      <div className="ml-auto self-end"><Lynx /></div>
    </div>
    <TaskSlot ml="ml-[20px]" w="w-[19px]">
      <svg width="19" height="19" viewBox="0 0 19 19" fill="none" stroke="#fff" strokeWidth="1.2">
        <path d="M0.6 0 V3 H13 V0 M0.6 19 V16 H13 V19" />
        <rect x="0.6" y="5.5" width="12.4" height="8" />
        <path d="M17.5 0 V6 M17.5 12 V19" />
        <rect x="16" y="7.5" width="3" height="3" fill="#fff" />
      </svg>
    </TaskSlot>
    <TaskSlot ml="ml-[40px]" w="w-[28px]">
      <div className="w-[28px] h-[28px] bg-[#eef2f4] flex items-center justify-center">
        <svg width="24" height="24" viewBox="0 0 24 24" stroke="#3d86bd" strokeWidth="1.6">
          <path d="M12 3 V21 M3 12 H21 M6 5 V10 M3.5 7.5 H8.5 M18 5 V10 M15.5 7.5 H20.5 M6 14 V19 M3.5 16.5 H8.5 M18 14 V19 M15.5 16.5 H20.5 M8 12 H16" />
        </svg>
      </div>
    </TaskSlot>
    <TaskSlot ml="ml-[34px]" w="w-[30px]">
      <div className="w-[30px] h-[30px] rounded-full bg-white border-[3px] border-[#45b0b5] flex items-end justify-center overflow-hidden">
        <svg width="22" height="24" viewBox="0 0 22 24">
          <path d="M3 8 C5 2 17 2 19 7 C20 10 16 11 15 11 L17 24 H5 L7 12 C5 12 3 10 3 8Z" fill="#fff" stroke="#3a2b28" strokeWidth="1.5" />
          <path d="M7 15 L11 13 L15 15 L17 24 H5Z" fill="#3a2b28" />
          <circle cx="9" cy="7" r="1.3" fill="#3a2b28" />
          <circle cx="15" cy="7" r="1.3" fill="#3a2b28" />
        </svg>
      </div>
    </TaskSlot>
    <TaskSlot ml="ml-[32px]" w="w-[29px]">
      <div className="w-[29px] h-[22px] bg-[#2c2c2c] border-2 border-[#7d8487] rounded-[2px] text-[6px] text-[#bbb] pl-[3px] pt-[3px]">C:\_</div>
    </TaskSlot>
    <TaskSlot ml="ml-[36px]" w="w-[23px]">
      <Settings size={24} strokeWidth={2.6} color="#fff" />
    </TaskSlot>
    <TaskSlot ml="ml-[37px]" w="w-[28px]" line>
      <svg width="28" height="24" viewBox="0 0 28 24">
        <path d="M0 2 C0 1 1 0 2 0 H10 L13 3 H0Z" fill="#e0a41c" />
        <rect y="3" width="28" height="21" fill="#ffd666" />
        <path d="M6 24 V14 C6 13 7 12 8 12 H20 C21 12 22 13 22 14 V24 H18 V17 H10 V24Z" fill="#1a8fd6" />
      </svg>
    </TaskSlot>
    <TaskSlot ml="ml-[36px]" w="w-[23px]">
      <div className="w-[23px] h-[30px] bg-[#6d7a84] rounded-[2px] p-[2px] flex flex-col gap-[2px]">
        <div className="h-[5px] bg-[#53d1f4]" />
        <div className="flex-1 grid grid-cols-3 gap-[1px]">
          <i className="bg-[#c9d0d5]" /><i className="bg-[#c9d0d5]" /><i className="bg-[#c9d0d5]" />
          <i className="bg-[#c9d0d5]" /><i className="bg-[#c9d0d5]" /><i className="row-span-2 bg-[#17548f]" />
          <i className="bg-[#c9d0d5]" /><i className="bg-[#c9d0d5]" />
        </div>
      </div>
    </TaskSlot>
    <TaskSlot ml="ml-[36px]" w="w-[30px]" line>
      <div className="w-[30px] h-[30px] bg-[#ffe100] flex items-center justify-center">
        <div className="w-[26px] h-[20px] rounded-[50%] bg-[#3a1d1d] text-[#ffe100] text-[8px] font-bold flex items-center justify-center">TALK</div>
      </div>
    </TaskSlot>
    <TaskSlot ml="ml-[32px]" w="w-[30px]">
      <svg width="30" height="30" viewBox="0 0 30 30">
        <path d="M22 0 L30 4 V26 L22 30 L9 18 L3.5 22.5 L0 20.5 V9.5 L3.5 7.5 L9 12Z" fill="#0d8ddb" />
        <path d="M22 8 L13 15 L22 22Z" fill="#2c4b4d" />
        <path d="M3.5 11 V19 L7.5 15Z" fill="#2c4b4d" />
        <path d="M22 0 L30 4 V26 L22 30Z" fill="#22a5ee" />
      </svg>
    </TaskSlot>
    <TaskSlot ml="ml-[34px]" w="w-[27px]">
      <svg width="27" height="29" viewBox="0 0 27 29">
        <ellipse cx="12" cy="11" rx="11" ry="8" fill="#e8e8e8" stroke="#d8453e" strokeWidth="1.5" transform="rotate(-25 12 11)" />
        <path d="M2 15 C5 20 9 20 13 18 L10 22 H4Z" fill="#a0a0a0" />
        <path d="M12 4 L16 18 M20 4 L15 18" stroke="#777" strokeWidth="1.4" />
        <ellipse cx="20" cy="24" rx="4" ry="3" fill="none" stroke="#1f8fe0" strokeWidth="1.8" />
        <ellipse cx="12" cy="26" rx="2.5" ry="3" fill="none" stroke="#1f8fe0" strokeWidth="1.8" />
      </svg>
    </TaskSlot>
    <TaskSlot ml="ml-[34px]" w="w-[27px]">
      <svg width="27" height="27" viewBox="0 0 27 27">
        <path d="M6 1 L27 5 L21 26 L0 21Z" fill="#b5dce6" />
        <path d="M6 1 L27 5 L26 8 L5 4Z" fill="#6e8a92" />
        <path d="M27 5 L21 26 L23 26 L27 8Z" fill="#b58a3a" />
        <path d="M6 5 L24 8 L20 24 L2 20Z" fill="#9fd0dc" opacity="0.7" />
      </svg>
    </TaskSlot>
    <div className="ml-[19px] w-[61px] h-[50px] bg-[#157a80] relative flex items-center justify-center shrink-0">
      <svg width="30" height="27" viewBox="0 0 30 27">
        <rect x="7" y="0" width="23" height="27" rx="1" fill="#1f7a47" />
        <path d="M18 0 H30 V9 H18Z" fill="#33c481" />
        <path d="M18 9 H30 V18 H18Z" fill="#21a366" />
        <path d="M7 0 H18 V9 H7Z" fill="#21a366" />
        <path d="M7 18 H30 V27 H7Z" fill="#185c37" />
        <rect x="0" y="6" width="15" height="15" rx="1" fill="#107c41" />
        <text x="3.5" y="18" fontSize="12" fontWeight="700" fill="#fff" fontFamily="Liberation Sans">X</text>
      </svg>
      <div className="absolute bottom-0 left-0 right-0 h-[3px] bg-[#99ebeb]" />
    </div>
    <TaskSlot ml="ml-[16px]" w="w-[32px]" line>
      <svg width="32" height="32" viewBox="0 0 32 32">
        <circle cx="14" cy="14" r="14" fill="#34a853" />
        <path d="M14 0 A14 14 0 0 1 26 7 H14 A7 7 0 0 0 8 10.5 L2 7.5 A14 14 0 0 1 14 0Z" fill="#ea4335" />
        <path d="M26 7 A14 14 0 0 1 14 28 L20 18 A7 7 0 0 0 20 10Z" fill="#fbbc05" />
        <circle cx="14" cy="14" r="6" fill="#4285f4" stroke="#fff" strokeWidth="1.5" />
        <circle cx="22" cy="22" r="10" fill="#c2185b" />
        <text x="14.5" y="25" fontSize="7" fill="#f6c6d8">도움</text>
      </svg>
    </TaskSlot>
    <svg width="31" height="34" viewBox="0 0 31 34" className="ml-[222px] shrink-0">
      <path d="M10 0 C12 5 16 8 16 13 C11 15 6 12 10 0Z" fill="#f0a22e" />
      <path d="M7 33 C0 33 -1 24 6 23 C7 16 18 14 21 21 C28 20 33 32 24 33Z" fill="#b7d3f2" />
    </svg>
    <span className="ml-[9px] w-[38px] text-[18px]">18°C</span>
    <span className="ml-[12px] w-[95px] text-[19.2px]">대체로 흐림</span>
    <ChevronUp size={20} strokeWidth={1.2} color="#fff" className="ml-[28px]" />
    <svg width="13" height="14" viewBox="0 0 13 14" className="ml-[14px]" fill="#fff">
      <rect x="0" y="3" width="12" height="10" rx="1" />
      <path d="M2 0 V3 M6 0 V3" stroke="#fff" />
    </svg>
    <svg width="21" height="20" viewBox="0 0 21 20" className="ml-[11px]" fill="none" stroke="#fff">
      <rect x="4.5" y="0.5" width="16" height="12" />
      <path d="M12 13 V17 H7 M0.5 4 H4 V14 H0.5Z" />
    </svg>
    <span className="ml-[13px] text-[18px]">가</span>
    <div className="ml-[13px] w-[75px] flex flex-col items-center gap-[6px] text-[15.5px]">
      <span>오후 10:13</span>
      <span>2023-06-12</span>
    </div>
    <div className="relative ml-[25px]">
      <svg width="20" height="20" viewBox="0 0 20 20">
        <path d="M0 0 H20 V15 H9 L4 20 V15 H0Z" fill="#fff" />
        <path d="M3 4 H17 M3 8 H17 M3 12 H12" stroke="#555" />
      </svg>
      <div className="absolute left-[9px] top-[9px] w-[21px] h-[21px] rounded-full bg-[#0f6c73] border border-[#7fc7c9] text-white text-[14px] font-bold flex items-center justify-center">8</div>
    </div>
  </div>
);

export default function App() {
  return (
    <div className="relative w-[1920px] h-[1080px] overflow-hidden [word-spacing:0.1em] font-['Noto_Sans_CJK_KR','Noto_Sans',sans-serif]">
      <TitleBar />
      <Ribbon />
      <div className="h-[99px] bg-[#e6e6e6]">
        <Qat />
        <FormulaBar />
      </div>
      <Sheet />
      <SheetTabs />
      <StatusBar />
      <Taskbar />
      <Dialog />
    </div>
  );
}
